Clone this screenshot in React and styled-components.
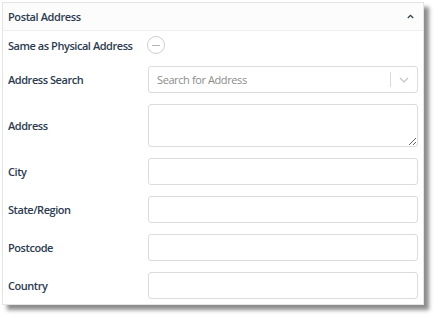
import React from "react";
import styled, { createGlobalStyle } from "styled-components";

const Global = createGlobalStyle`
  html, body { margin: 0; padding: 0; background: #ffffff; }
  body { font-family: "Open Sans", "Noto Sans", Arial, sans-serif; }
`;

const Page = styled.div`
  padding: 2px 0 0 2px;
  width: 438px;
  height: 318px;
  box-sizing: border-box;
`;

const Panel = styled.section`
  width: 422px;
  height: 303px;
  box-sizing: border-box;
  border: 1px solid #e4e4e4;
  background: #fff;
  box-shadow: 5px 5px 4px rgba(0, 0, 0, 0.45);
  display: flex;
  flex-direction: column;
`;

const Header = styled.header`
  height: 27px;
  flex: none;
  display: flex;
  align-items: center;
  justify-content: space-between;
  padding: 0 9px 0 5px;
  background: #fcfcfc;
  border-bottom: 1px solid #efefef;
`;

const Title = styled.h2`
  margin: 0;
  font-size: 11px;
  font-weight: 600;
  letter-spacing: -0.4px;
  color: #2c3b50;
`;

const Body = styled.div`
  display: grid;
  grid-template-columns: 140px 1fr;
  row-gap: 11px;
  align-items: center;
  padding: 4px 5px 0 5px;
`;

const Label = styled.label`
  font-size: 11px;
  font-weight: 600;
  letter-spacing: -0.45px;
  color: #2c3b50;
  white-space: nowrap;
`;

const ToggleRow = styled.div`
  height: 20px;
  display: flex;
  align-items: center;
`;

const Circle = styled.button`
  width: 18px;
  height: 18px;
  margin-left: -1px;
  border-radius: 50%;
  border: 1px solid #cfcfcf;
  background: #fff;
  padding: 0;
  display: flex;
  align-items: center;
  justify-content: center;
  &::after {
    content: "";
    width: 8px;
    height: 1px;
    background: #b5b5b5;
  }
`;

const Input = styled.input`
  box-sizing: border-box;
  width: 100%;
  height: 27px;
  border: 1px solid #dcdcdc;
  border-radius: 3px;
  background: #fff;
  font-family: inherit;
  font-size: 11px;
  padding: 0 8px;
  outline: none;
`;

const TextArea = styled.textarea`
  box-sizing: border-box;
  width: 100%;
  height: 43px;
  display: block;
  border: 1px solid #dcdcdc;
  border-radius: 3px;
  background: #fff;
  resize: vertical;
  outline: none;
  font-family: inherit;
`;

const SelectBox = styled.div`
  box-sizing: border-box;
  height: 27px;
  border: 1px solid #dcdcdc;
  border-radius: 3px;
  display: flex;
  align-items: center;
`;

const SelectText = styled.span`
  flex: 1;
  padding-left: 8px;
  font-size: 11px;
  letter-spacing: -0.4px;
  color: #8c8c8c;
`;

const Sep = styled.span`
  width: 1px;
  height: 15px;
  background: #d9d9d9;
`;

const Caret = styled.span`
  width: 26px;
  display: flex;
  align-items: center;
  justify-content: center;
`;

const Field = ({ label, children }) => (
  <>
    <Label>{label}</Label>
    {children}
  </>
);

export default function App() {
  return (
    <>
      <Global />
      <Page>
        <Panel>
          <Header>
            <Title>Postal Address</Title>
            <svg width="7" height="5" viewBox="0 0 7 5">
              <path d="M0.8 4 L3.5 1.3 L6.2 4" fill="none" stroke="#34404e" strokeWidth="1.3" />
            </svg>
          </Header>
          <Body>
            <Field label="Same as Physical Address">
              <ToggleRow>
                <Circle aria-label="toggle" />
              </ToggleRow>
            </Field>
            <Field label="Address Search">
              <SelectBox>
                <SelectText>Search for Address</SelectText>
                <Sep />
                <Caret>
                  <svg width="10" height="6" viewBox="0 0 10 6">
                    <path d="M1 1 L5 5 L9 1" fill="none" stroke="#c4c4c4" strokeWidth="1.2" />
                  </svg>
                </Caret>
              </SelectBox>
            </Field>
            <Field label="Address">
              <TextArea />
            </Field>
            <Field label="City">
              <Input />
            </Field>
            <Field label="State/Region">
              <Input />
            </Field>
            <Field label="Postcode">
              <Input />
            </Field>
            <Field label="Country">
              <Input />
            </Field>
          </Body>
        </Panel>
      </Page>
    </>
  );
}
